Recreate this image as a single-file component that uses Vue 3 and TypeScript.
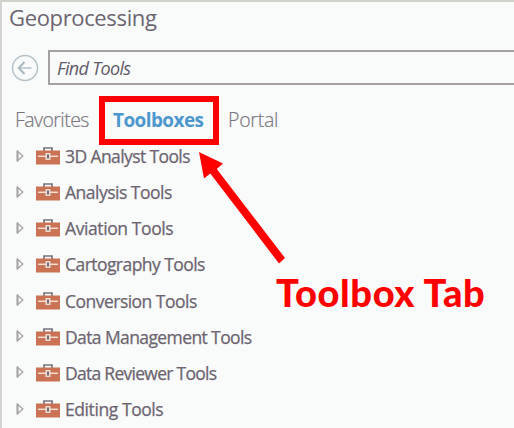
<script setup lang="ts">
interface Toolbox {
  name: string
  spacing: number
}

const toolboxes: Toolbox[] = [
  { name: '3D Analyst Tools', spacing: -0.6 },
  { name: 'Analysis Tools', spacing: -0.5 },
  { name: 'Aviation Tools', spacing: -0.4 },
  { name: 'Cartography Tools', spacing: -0.55 },
  { name: 'Conversion Tools', spacing: -0.52 },
  { name: 'Data Management Tools', spacing: -0.6 },
  { name: 'Data Reviewer Tools', spacing: -0.72 },
  { name: 'Editing Tools', spacing: -0.42 },
]
</script>

<template>
  <main class="pane">
    <h1 class="title"><span>Geoprocessing</span></h1>
    <div class="search">
      <svg class="back" width="28" height="28" viewBox="0 0 28 28">
        <circle cx="14" cy="14" r="12.5" />
        <path class="shaft" d="M8 14H20.5" />
        <path class="tip" d="M13.5 8L7.7 14L13.5 20" />
      </svg>
      <div class="field"><span>Find Tools</span></div>
    </div>
    <nav class="tabs">
      <span class="tab favorites">Favorites</span>
      <span class="tab active"><span>Toolboxes</span></span>
      <span class="tab portal">Portal</span>
    </nav>
    <ul class="list">
      <li v-for="box in toolboxes" :key="box.name" class="row">
        <svg class="expander" width="9" height="13" viewBox="0 0 9 13">
          <path d="M1.5 1.2V10.8L6.8 6Z" />
          <path class="edge" d="M1.5 0.8V11.2" />
        </svg>
        <svg class="icon" width="24" height="18" viewBox="0 0 24 18">
          <path class="handle" d="M8 4.5V1H16V4.5" />
          <rect class="case" x="0" y="3.5" width="24" height="14" />
          <path class="seam" d="M2 9.3H22" />
          <rect class="lock" x="9.5" y="6" width="5" height="7" />
          <path class="pin" d="M12 7.5V11.5" />
        </svg>
        <span class="name" :style="{ letterSpacing: box.spacing + 'px' }">{{ box.name }}</span>
      </li>
    </ul>
    <svg class="arrow" width="90" height="116" viewBox="0 0 90 116">
      <path d="M1 0L25 11.5L18.8 17L87 106L81 111.5L12.3 21.5L6 26.5Z" />
    </svg>
    <div class="callout">Toolbox Tab</div>
  </main>
</template>

<style>
body {
  margin: 0;
  background: #f9fbfa;
}
</style>

<style scoped>
.pane {
  position: relative;
  box-sizing: border-box;
  width: 514px;
  height: 428px;
  overflow: hidden;
  border-top: 2px solid #cfd2cb;
  border-left: 2px solid #d5d3cf;
  background: #f9fbfa;
  color: #6c6470;
  font-family: "Open Sans", "Noto Sans", sans-serif;
  white-space: nowrap;
}
.title {
  margin: 0;
  padding-left: 7px;
  height: 48px;
  font-size: 22px;
  line-height: 31px;
  font-weight: 400;
  letter-spacing: -0.35px;
}
.search {
  display: flex;
  align-items: center;
  height: 35px;
  padding-left: 9px;
}
.back {
  flex: none;
  margin-right: 9px;
  fill: none;
  stroke: #b4c2c9;
  stroke-width: 1.5;
}
.back .tip {
  stroke: #aab8c0;
  stroke-width: 2;
}
.field {
  box-sizing: border-box;
  flex: 1;
  height: 35px;
  border: 2px solid #a5a0a4;
  border-right: 0;
  padding-left: 7px;
  font-size: 18px;
  line-height: 32px;
  font-style: italic;
  color: #62596a;
  letter-spacing: -0.68px;
}
.tabs {
  display: flex;
  align-items: center;
  height: 49px;
  margin-top: 11px;
  padding-left: 13px;
  font-size: 19.5px;
}
.favorites,
.portal {
  position: relative;
  top: -1px;
  color: #79767e;
  font-weight: 300;
  letter-spacing: -0.55px;
  -webkit-text-stroke: 0.2px;
}
.favorites {
  width: 84px;
}
.active {
  box-sizing: border-box;
  width: 120px;
  height: 49px;
  border: 6px solid #fe0000;
  padding-left: 8px;
  line-height: 36px;
  color: #4c97cd;
  font-size: 19px;
  font-weight: 700;
  letter-spacing: -0.6px;
}
.portal {
  margin-left: 9px;
  letter-spacing: -0.25px;
}
.list {
  margin: -7px 0 0;
  padding: 0 0 0 14px;
  list-style: none;
}
.row {
  display: flex;
  align-items: center;
  height: 36.15px;
}
.expander {
  flex: none;
  margin-right: 11px;
  fill: #fafafa;
  stroke: #a5a4a7;
  stroke-width: 1.3;
}
.edge {
  stroke-width: 2;
}
.icon {
  flex: none;
  margin-right: 5px;
}
.handle {
  fill: none;
  stroke: #79717c;
  stroke-width: 1.7;
}
.case {
  fill: #ca7253;
}
.seam {
  stroke: #f1ddd2;
  stroke-width: 1.5;
}
.lock {
  fill: #eadbd3;
}
.pin {
  stroke: #7c6770;
  stroke-width: 2;
}
.name {
  font-size: 17.5px;
  -webkit-text-stroke: 0.25px;
}
.arrow {
  position: absolute;
  left: 196px;
  top: 150px;
  fill: #fe0000;
}
.callout {
  position: absolute;
  left: 274px;
  top: 266px;
  color: #fe0000;
  font-family: Lato, "Open Sans", sans-serif;
  font-size: 38px;
  line-height: 48px;
  font-weight: 900;
  letter-spacing: 0.6px;
}
</style>
